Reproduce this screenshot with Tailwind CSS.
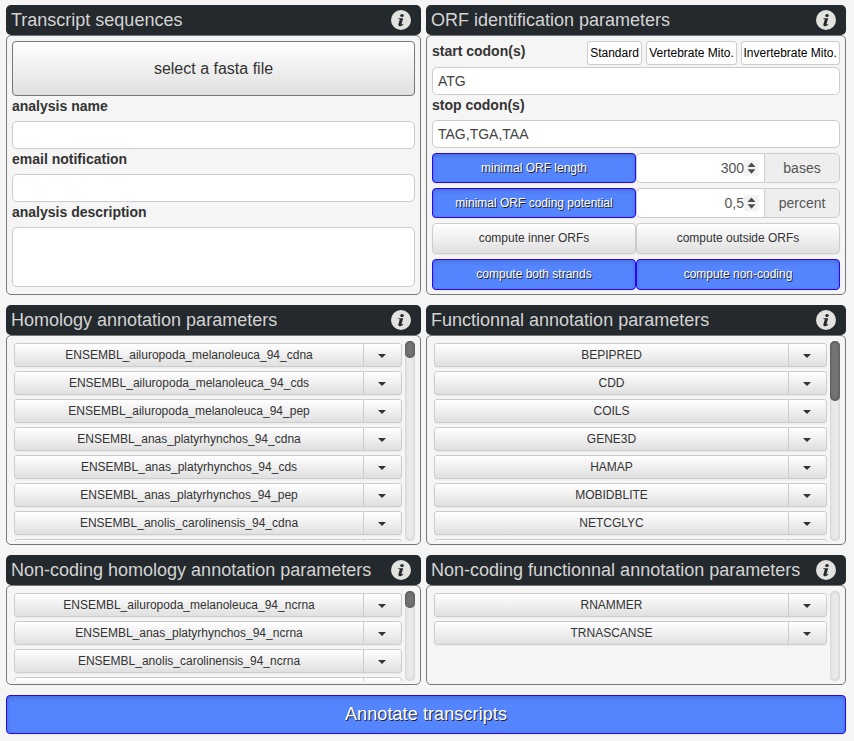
<!DOCTYPE html>
<html lang="en">
<head>
<meta charset="utf-8">
<title>Annotation</title>
<script src="https://cdn.jsdelivr.net/npm/@tailwindcss/browser@4"></script>
</head>
<body class="w-[854px] h-[741px] overflow-hidden bg-[#f5f5f5] pl-[6px] pt-[5px] font-['Liberation_Sans',Arial,sans-serif] text-[14px] text-[#333]">
<svg class="hidden"><symbol id="info" viewBox="0 0 20 20"><circle cx="10" cy="10" r="10" fill="#e2e3df"/><ellipse cx="11" cy="5.4" rx="1.8" ry="1.5" fill="#24292d"/><path d="M7.3 8.3h4.9l-1.7 5.7c-.2.8.5.7 1.4-.2l.5.4c-1.2 1.5-2.4 2-3.6 2-1.3 0-1.7-.8-1.4-1.9l1.3-4.5c.2-.6 0-.8-1.4-.8z" fill="#24292d"/></symbol></svg>
<main class="grid grid-cols-[415px_420px] gap-x-[5px] gap-y-[10px]">
  <section>
    <h2 class="h-[30px] bg-[#24292d] rounded-[5px] flex items-center justify-between pl-[5px] pr-[10px] text-[18px] text-[#d4d4d4]"><span>Transcript sequences</span><svg class="size-[20px]"><use href="#info"/></svg></h2>
    <div class="h-[260px] border border-[#777] rounded-[5px] p-[5px]">
      <button class="block w-full h-[55px] rounded-[4px] border border-[#777] bg-linear-to-b from-white to-[#e0e0e0] text-[16px]">select a fasta file</button>
      <label class="block h-[25px] leading-[20px] font-bold">analysis name</label>
      <div class="h-[28px] bg-white border border-[#ccc] rounded-[5px]"></div>
      <label class="block h-[25px] leading-[20px] font-bold">email notification</label>
      <div class="h-[28px] bg-white border border-[#ccc] rounded-[5px]"></div>
      <label class="block h-[25px] leading-[20px] font-bold">analysis description</label>
      <div class="h-[60px] bg-white border border-[#ccc] rounded-[5px]"></div>
    </div>
  </section>
  <section>
    <h2 class="h-[30px] bg-[#24292d] rounded-[5px] flex items-center justify-between pl-[5px] pr-[10px] text-[18px] text-[#d4d4d4]"><span>ORF identification parameters</span><svg class="size-[20px]"><use href="#info"/></svg></h2>
    <div class="h-[260px] border border-[#777] rounded-[5px] p-[5px]">
      <div class="flex h-[26px] gap-[4px] text-[12px] text-black">
        <label class="mr-auto text-[14px] leading-[20px] font-bold text-[#333]">start codon(s)</label>
        <div class="w-[55px] h-[24px] leading-[22px] text-center whitespace-nowrap bg-white border border-[#ccc] rounded-[3px]">Standard</div>
        <div class="w-[91px] h-[24px] leading-[22px] text-center whitespace-nowrap bg-white border border-[#ccc] rounded-[3px]">Vertebrate Mito.</div>
        <div class="w-[99px] h-[24px] leading-[22px] pl-[1.5px] whitespace-nowrap bg-white border border-[#ccc] rounded-[3px]">Invertebrate Mito.</div>
      </div>
      <div class="h-[28px] leading-[26px] pl-[5px] bg-white border border-[#ccc] rounded-[5px] text-[#444]">ATG</div>
      <label class="block h-[25px] leading-[20px] font-bold">stop codon(s)</label>
      <div class="h-[28px] leading-[26px] pl-[5px] bg-white border border-[#ccc] rounded-[5px] text-[#444]">TAG,TGA,TAA</div>
      <div class="mt-[5px] flex h-[30px]">
        <button class="w-[204px] rounded-[4px] border border-[#2b05f0] bg-[#5485ff] text-white text-[12px] [text-shadow:1px_1px_0_#222] shadow-[inset_0_2px_4px_rgba(0,0,0,.15),0_1px_2px_rgba(0,0,0,.05)]">minimal ORF length</button>
        <div class="w-[128px] rounded-l-[5px] bg-white border border-r-0 border-[#ccc] flex items-center justify-end pr-[5px] text-[#555]">300<svg class="w-[15px] h-[16px] bg-[#f3f3f3]" viewBox="0 0 15 16"><path d="M3.5 7l4-4.5 4 4.5zM3.5 9.2l4 4.5 4-4.5z" fill="#4d4d4d"/></svg></div>
        <div class="w-[76px] rounded-r-[5px] bg-[#eee] border border-[#ccc] text-center leading-[28px] text-[#555]">bases</div>
      </div>
      <div class="mt-[5px] flex h-[30px]">
        <button class="w-[204px] rounded-[4px] border border-[#2b05f0] bg-[#5485ff] text-white text-[12px] [text-shadow:1px_1px_0_#222] shadow-[inset_0_2px_4px_rgba(0,0,0,.15),0_1px_2px_rgba(0,0,0,.05)]">minimal ORF coding potential</button>
        <div class="w-[128px] rounded-l-[5px] bg-white border border-r-0 border-[#ccc] flex items-center justify-end pr-[5px] text-[#555]">0,5<svg class="w-[15px] h-[16px] bg-[#f3f3f3]" viewBox="0 0 15 16"><path d="M3.5 7l4-4.5 4 4.5zM3.5 9.2l4 4.5 4-4.5z" fill="#4d4d4d"/></svg></div>
        <div class="w-[76px] rounded-r-[5px] bg-[#eee] border border-[#ccc] text-center leading-[28px] text-[#555]">percent</div>
      </div>
      <div class="mt-[5px] flex h-[31px] text-[12px]">
        <button class="w-[204px] pb-[1px] rounded-[4px] border border-[#ccc] bg-linear-to-b from-white to-[#e0e0e0] shadow-[0_1px_2px_rgba(0,0,0,.05)]">compute inner ORFs</button>
        <button class="w-[204px] pb-[1px] rounded-[4px] border border-[#ccc] bg-linear-to-b from-white to-[#e0e0e0] shadow-[0_1px_2px_rgba(0,0,0,.05)]">compute outside ORFs</button>
      </div>
      <div class="mt-[5px] flex h-[31px] text-[12px] text-white">
        <button class="w-[204px] pb-[1px] rounded-[4px] border border-[#2b05f0] bg-[#5485ff] [text-shadow:1px_1px_0_#222] shadow-[inset_0_2px_4px_rgba(0,0,0,.15),0_1px_2px_rgba(0,0,0,.05)]">compute both strands</button>
        <button class="w-[204px] pb-[1px] rounded-[4px] border border-[#2b05f0] bg-[#5485ff] [text-shadow:1px_1px_0_#222] shadow-[inset_0_2px_4px_rgba(0,0,0,.15),0_1px_2px_rgba(0,0,0,.05)]">compute non-coding</button>
      </div>
    </div>
  </section>
  <section>
    <h2 class="h-[30px] bg-[#24292d] rounded-[5px] flex items-center justify-between pl-[5px] pr-[10px] text-[18px] text-[#d4d4d4]"><span>Homology annotation parameters</span><svg class="size-[20px]"><use href="#info"/></svg></h2>
    <div class="h-[210px] border border-[#777] rounded-[5px] flex justify-between pl-[7px] pr-[5px] pt-[5px] pb-[3px]">
      <div class="w-[388px] overflow-hidden pt-[2px]" data-list="ENSEMBL_ailuropoda_melanoleuca_94_cdna,ENSEMBL_ailuropoda_melanoleuca_94_cds,ENSEMBL_ailuropoda_melanoleuca_94_pep,ENSEMBL_anas_platyrhynchos_94_cdna,ENSEMBL_anas_platyrhynchos_94_cds,ENSEMBL_anas_platyrhynchos_94_pep,ENSEMBL_anolis_carolinensis_94_cdna,"></div>
      <div class="w-[10px] rounded-full bg-[#e9e9e9] shadow-[inset_0_0_3px_#bbb]"><div class="h-[17px] rounded-full bg-[#737373] shadow-[inset_0_0_3px_#444]"></div></div>
    </div>
  </section>
  <section>
    <h2 class="h-[30px] bg-[#24292d] rounded-[5px] flex items-center justify-between pl-[5px] pr-[10px] text-[18px] text-[#d4d4d4]"><span>Functionnal annotation parameters</span><svg class="size-[20px]"><use href="#info"/></svg></h2>
    <div class="h-[210px] border border-[#777] rounded-[5px] flex justify-between pl-[7px] pr-[5px] pt-[5px] pb-[3px]">
      <div class="w-[393px] overflow-hidden pt-[2px]" data-list="BEPIPRED,CDD,COILS,GENE3D,HAMAP,MOBIDBLITE,NETCGLYC,"></div>
      <div class="w-[10px] rounded-full bg-[#e9e9e9] shadow-[inset_0_0_3px_#bbb]"><div class="h-[60px] rounded-full bg-[#737373] shadow-[inset_0_0_3px_#444]"></div></div>
    </div>
  </section>
  <section>
    <h2 class="h-[30px] bg-[#24292d] rounded-[5px] flex items-center justify-between pl-[5px] pr-[10px] text-[18px] text-[#d4d4d4]"><span>Non-coding homology annotation parameters</span><svg class="size-[20px]"><use href="#info"/></svg></h2>
    <div class="h-[100px] border border-[#777] rounded-[5px] flex justify-between pl-[7px] pr-[5px] pt-[5px] pb-[3px]">
      <div class="w-[388px] overflow-hidden pt-[2px]" data-list="ENSEMBL_ailuropoda_melanoleuca_94_ncrna,ENSEMBL_anas_platyrhynchos_94_ncrna,ENSEMBL_anolis_carolinensis_94_ncrna,"></div>
      <div class="w-[10px] rounded-full bg-[#e9e9e9] shadow-[inset_0_0_3px_#bbb]"><div class="h-[17px] rounded-full bg-[#737373] shadow-[inset_0_0_3px_#444]"></div></div>
    </div>
  </section>
  <section>
    <h2 class="h-[30px] bg-[#24292d] rounded-[5px] flex items-center justify-between pl-[5px] pr-[10px] text-[18px] text-[#d4d4d4]"><span>Non-coding functionnal annotation parameters</span><svg class="size-[20px]"><use href="#info"/></svg></h2>
    <div class="h-[100px] border border-[#777] rounded-[5px] flex justify-between pl-[7px] pr-[5px] pt-[5px] pb-[3px]">
      <div class="w-[393px] overflow-hidden pt-[2px]" data-list="RNAMMER,TRNASCANSE"></div>
      <div class="w-[10px] rounded-full bg-[#e9e9e9] shadow-[inset_0_0_3px_#bbb]"></div>
    </div>
  </section>
</main>
<button class="mt-[10px] block w-[840px] h-[39px] rounded-[4px] border border-[#2b05f0] bg-[#5485ff] text-white text-[18px] tracking-[.1px] [text-shadow:1px_1px_0_#222] shadow-[inset_0_2px_4px_rgba(0,0,0,.15),0_1px_2px_rgba(0,0,0,.05)]">Annotate transcripts</button>
<script>
document.querySelectorAll('[data-list]').forEach(list => {
  list.innerHTML = list.dataset.list.split(',').map(name => `
    <div class="mb-[4px] flex h-[24px] border border-[#ccc] rounded-[3px] bg-linear-to-b from-white to-[#e0e0e0] shadow-[0_1px_2px_rgba(0,0,0,.05)] text-[12px]">
      <span class="flex-1 text-center leading-[22px]">${name}</span>
      <span class="w-[38px] border-l border-[#ccc] flex items-center justify-center pr-[1px]"><svg class="w-[8px] h-[4px] mt-[2px]" viewBox="0 0 8 4"><path d="M0 0h8L4 4z" fill="#333"/></svg></span>
    </div>`).join('');
});
</script>
</body>
</html>
